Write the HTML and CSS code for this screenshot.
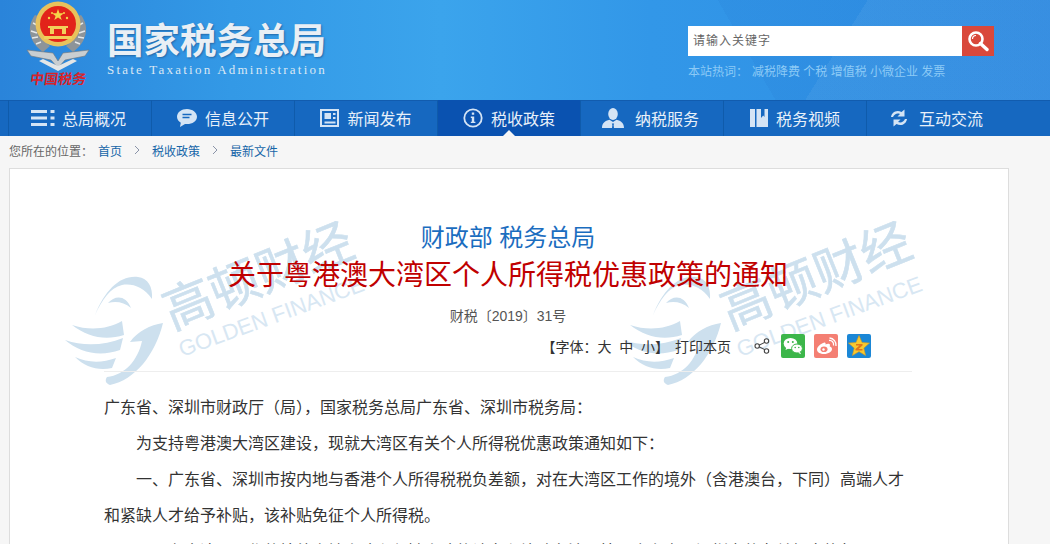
FILE: index.html
```html
<!DOCTYPE html>
<html lang="zh-CN">
<head>
    <meta charset="UTF-8">
    <meta name="viewport" content="width=device-width, initial-scale=1.0">
    <title>关于粤港澳大湾区个人所得税优惠政策的通知</title>
    <link rel="stylesheet" href="styles.css">
</head>
<body>

    <!-- Top banner -->
    <header class="banner">
        <div class="emblem">
            <svg width="70" height="70" viewBox="0 0 70 70">
                <path d="M12 14 C3 26 6 41 20 51 L27 45 C17 38 13 28 17 16Z" fill="#8d9499"/>
                <path d="M58 14 C67 26 64 41 50 51 L43 45 C53 38 57 28 53 16Z" fill="#8d9499"/>
                <path d="M10 22 l6 3 M8 30 l6 2 M9 37 l6 -1 M13 43 l5 -2 M60 22 l-6 3 M62 30 l-6 2 M61 37 l-6 -1 M57 43 l-5 -2" stroke="#e6e9ea" stroke-width="1.500"/>
                <path d="M4 49 L30 52 L35 60 L40 52 L66 49 L62 55 L42 59 L35 67 L28 59 L8 55Z" fill="#c9ced1" stroke="#70777c" stroke-width=".6"/>
                <path d="M16 60 L35 70 L54 60 L50 58 L35 65 L20 58Z" fill="#e3e6e7"/>
                <circle cx="35" cy="23" r="22.500" fill="#e8c25c"/>
                <circle cx="35" cy="23" r="18" fill="#e2231a"/>
                <path d="M35 8 l1.500 4.200 4.400 0 -3.500 2.700 1.300 4.200 -3.700 -2.500 -3.700 2.500 1.300 -4.200 -3.500 -2.700 4.400 0Z" fill="#f6d64a"/>
                <circle cx="26" cy="17" r="1.200" fill="#f6d64a"/>
                <circle cx="44" cy="17" r="1.200" fill="#f6d64a"/>
                <circle cx="29" cy="12" r="1" fill="#f6d64a"/>
                <circle cx="41" cy="12" r="1" fill="#f6d64a"/>
                <path d="M25 25 h20 v2 h-2 v6 h-16 v-6 h-2Z" fill="#f2cf5b"/>
                <path d="M31 28 h8 v5 h-8Z" fill="#e2231a"/>
                <path d="M21 35 h28 v3 h-28Z" fill="#f2cf5b"/>
            </svg>
            <span class="emblem-text">中国税务</span>
        </div>
        <div class="brand">
            <h1>国家税务总局</h1>
            <p>State Taxation Administration</p>
        </div>
        <div class="search-box">
            <div class="search-row">
                <div class="search-input">请输入关键字</div>
                <button class="search-btn" type="button">
                    <svg width="22" height="22" viewBox="0 0 22 22">
                        <circle cx="9" cy="9" r="6.500" fill="none" stroke="#fff" stroke-width="2.600"/>
                        <path d="M5.500 9 a3.500 3.500 0 0 1 3.500 -3.500" fill="none" stroke="#fff" stroke-width="1.200"/>
                        <path d="M13.500 13.500 L20 19.500" stroke="#fff" stroke-width="3.400" stroke-linecap="round"/>
                    </svg>
                </button>
            </div>
            <p class="hot-words">本站热词：<span class="hot-list">减税降费 个税 增值税 小微企业 发票</span></p>
        </div>
    </header>

    <!-- Main navigation -->
    <nav class="main-nav">
        <a class="nav-item">
            <svg class="icon-menu" width="24" height="18" viewBox="0 0 24 18"><path d="M0 1h16v3H0zM0 7.500h16v3H0zM0 14h16v3H0zM19.500 1h4v3h-4zM19.500 7.500h4v3h-4zM19.500 14h4v3h-4z" fill="#d4e4f5"/></svg>
            总局概况
        </a>
        <a class="nav-item">
            <svg width="20" height="18" viewBox="0 0 20 18"><path d="M10 0C4.500 0 0 3.400 0 7.700c0 2.500 1.500 4.600 3.800 6L3 18l5-3.100c.7.100 1.300.2 2 .2 5.500 0 10-3.300 10-7.400S15.500 0 10 0z" fill="#d4e4f5"/><path d="M5.500 5.500h9M5.500 8.500h7" stroke="#1668c0" stroke-width="1.400"/></svg>
            信息公开
        </a>
        <a class="nav-item">
            <svg width="19" height="18" viewBox="0 0 19 18"><path d="M1 1h17v16H1z" fill="none" stroke="#d4e4f5" stroke-width="2"/><path d="M4.500 4h6.500v6H4.500zM13 4h2.500v2H13zM13 8h2.500v2H13zM4.500 12.500h11v2h-11z" fill="#d4e4f5"/></svg>
            新闻发布
        </a>
        <a class="nav-item active">
            <svg width="20" height="20" viewBox="0 0 20 20"><circle cx="10" cy="10" r="8.700" fill="none" stroke="#d4e4f5" stroke-width="1.800"/><path d="M8.800 4.500h2.400v2.300H8.800zM7.800 8.500h3.400v5.200h1.200v1.400H7.800v-1.400h1v-3.800h-1z" fill="#d4e4f5"/></svg>
            税收政策
        </a>
        <a class="nav-item">
            <svg class="icon-wide" width="22" height="20" viewBox="0 0 22 20"><ellipse cx="11" cy="6" rx="4.800" ry="6" fill="#d4e4f5"/><path d="M0 20c0-5 3-7 7.500-8.200L11 14l3.500-2.200C19 13 22 15 22 20H12l-.4-3 .6-1.500h-2.400l.6 1.500-.4 3z" fill="#d4e4f5"/></svg>
            纳税服务
        </a>
        <a class="nav-item">
            <svg width="18" height="18" viewBox="0 0 18 18"><path d="M0 0h5v18H0zM6.500 0h4.500v9l2.200-2.400 1.300 1.500V0H18v18H6.500z" fill="#d4e4f5"/></svg>
            税务视频
        </a>
        <a class="nav-item">
            <svg class="icon-wide" width="18" height="18" viewBox="0 0 18 18"><path d="M1 8C1.500 3.500 6.500 0 11.500 3L14.500 0.500V7.500H7.500L10 5C7 3.800 4.500 5 3 8z M17 10C16.500 14.500 11.500 18 6.500 15L3.500 17.500V10.500H10.500L8 13C11 14.200 13.500 13 15 10z" fill="#d4e4f5"/></svg>
            互动交流
        </a>
    </nav>

    <!-- Breadcrumb -->
    <div class="crumbs">
        <span class="crumbs-label">您所在的位置：</span>
        <a>首页</a>
        <svg class="crumb-arrow" width="6" height="10" viewBox="0 0 6 10"><path d="M1 1l4 4-4 4" fill="none" stroke="#8a93a8"/></svg>
        <a>税收政策</a>
        <svg class="crumb-arrow" width="6" height="10" viewBox="0 0 6 10"><path d="M1 1l4 4-4 4" fill="none" stroke="#8a93a8"/></svg>
        <a>最新文件</a>
    </div>

    <!-- Article -->
    <main class="article">
        <svg class="watermark wm-left" width="340" height="190" viewBox="0 -20 340 190">
            <g fill="#cde0ee">
                <path d="M35 90C45 65 60 50 78 52C88 53 93 62 92 74C84 62 72 58 62 60C50 63 42 75 35 90Z"/>
                <path d="M48 78C55 70 66 70 71 83C64 77 56 76 48 78Z"/>
                <path d="M12 100C30 106 48 104 62 96L64 110C45 116 28 112 12 100Z"/>
                <path d="M5 115C25 122 45 120 63 113L60 125C40 132 20 128 5 115Z"/>
                <path d="M15 132C28 138 42 138 56 133L52 143C38 146 25 142 15 132Z"/>
                <path d="M103 98C90 100 78 106 70 117L82 116C78 135 65 150 47 152C45 155 45 158 50 160C75 155 95 130 103 98Z"/>
            </g>
            <text class="wm-cn" transform="translate(112 105) rotate(-22)">高顿财经</text>
            <text class="wm-en" transform="translate(122 132) rotate(-20)">GOLDEN FINANCE</text>
        </svg>
        <svg class="watermark wm-right" width="340" height="190" viewBox="0 -20 340 190">
            <g fill="#cde0ee">
                <path d="M35 90C45 65 60 50 78 52C88 53 93 62 92 74C84 62 72 58 62 60C50 63 42 75 35 90Z"/>
                <path d="M48 78C55 70 66 70 71 83C64 77 56 76 48 78Z"/>
                <path d="M12 100C30 106 48 104 62 96L64 110C45 116 28 112 12 100Z"/>
                <path d="M5 115C25 122 45 120 63 113L60 125C40 132 20 128 5 115Z"/>
                <path d="M15 132C28 138 42 138 56 133L52 143C38 146 25 142 15 132Z"/>
                <path d="M103 98C90 100 78 106 70 117L82 116C78 135 65 150 47 152C45 155 45 158 50 160C75 155 95 130 103 98Z"/>
            </g>
            <text class="wm-cn" transform="translate(112 105) rotate(-22)">高顿财经</text>
            <text class="wm-en" transform="translate(122 132) rotate(-20)">GOLDEN FINANCE</text>
        </svg>

        <div class="article-head">
            <div class="issuer">财政部 税务总局</div>
            <h2 class="article-title">关于粤港澳大湾区个人所得税优惠政策的通知</h2>
            <div class="doc-no">财税〔2019〕31号</div>
            <div class="tools">
                <span class="font-size">【字体：大&nbsp;&nbsp;中&nbsp;&nbsp;小】</span>
                <span class="print">打印本页</span>
                <svg class="share" width="16" height="16" viewBox="0 0 16 16">
                    <path d="M12.500 3.500L3.500 8l9 4.500" fill="none" stroke="#444" stroke-width="1.100"/>
                    <circle cx="12.500" cy="3" r="2.200" fill="#fff" stroke="#444" stroke-width="1.100"/>
                    <circle cx="3.200" cy="8" r="2.200" fill="#fff" stroke="#444" stroke-width="1.100"/>
                    <circle cx="12.500" cy="13" r="2.200" fill="#fff" stroke="#444" stroke-width="1.100"/>
                </svg>
                <div class="share-icons">
                    <svg width="24" height="24" viewBox="0 0 24 24">
                        <rect width="24" height="24" rx="2" fill="#3cb64a"/>
                        <ellipse cx="9.500" cy="9.500" rx="6.800" ry="5.600" fill="#fff"/>
                        <path d="M5.500 13l-1 3 3.500-1.800z" fill="#fff"/>
                        <ellipse cx="16" cy="14.500" rx="5.400" ry="4.500" fill="#fff" stroke="#3cb64a"/>
                        <path d="M19 18l1.200 2.300-3.200-1.500z" fill="#fff"/>
                        <circle cx="7.200" cy="8" r="1" fill="#3cb64a"/>
                        <circle cx="11.800" cy="8" r="1" fill="#3cb64a"/>
                        <circle cx="14.200" cy="13.500" r=".8" fill="#3cb64a"/>
                        <circle cx="17.800" cy="13.500" r=".8" fill="#3cb64a"/>
                    </svg>
                    <svg width="24" height="24" viewBox="0 0 24 24">
                        <rect width="24" height="24" rx="2" fill="#f47f73"/>
                        <path d="M10.500 8.500C6.500 9.500 3 13 3 15.500 3 18.500 6.500 20 10 20c4.500 0 8-2.400 8-5 0-1.500-1.300-2.200-2.300-2.500.6-1.500.2-2.500-1-2.700-1-.2-2.300.3-3.200.7.400-1.500-.3-2.300-1-2z" fill="#fff"/>
                        <ellipse cx="10" cy="15.300" rx="3.500" ry="2.800" fill="#f47f73"/>
                        <circle cx="9.500" cy="15.500" r="1.200" fill="#fff"/>
                        <path d="M15 6.500a4 4 0 0 1 4.500 5M15.500 4a7 7 0 0 1 6.500 8" fill="none" stroke="#fff" stroke-width="1.300"/>
                    </svg>
                    <svg width="24" height="24" viewBox="0 0 24 24">
                        <rect width="24" height="24" rx="2" fill="#1b87d6"/>
                        <path d="M12 1.500l3 7 7.500.6-5.700 5 1.800 7.400L12 17.600l-6.600 3.900 1.800-7.400-5.700-5L9 8.500z" fill="#f8c92f" stroke="#d99a1c" stroke-width=".6"/>
                        <path d="M9 10h6.500v1.500L11.500 15h4v1.500H8.500V15l4-3.500H9z" fill="#e2731c"/>
                    </svg>
                </div>
            </div>
        </div>

        <div class="article-body">
            <p class="no-indent">广东省、深圳市财政厅（局），国家税务总局广东省、深圳市税务局：</p>
            <p>为支持粤港澳大湾区建设，现就大湾区有关个人所得税优惠政策通知如下：</p>
            <p>一、广东省、深圳市按内地与香港个人所得税税负差额，对在大湾区工作的境外（含港澳台，下同）高端人才和紧缺人才给予补贴，该补贴免征个人所得税。</p>
            <p>二、在大湾区工作的境外高端人才和紧缺人才的认定和补贴办法，按照广东省、深圳市的有关规定执行。</p>
        </div>
    </main>

</body>
</html>
```

FILE: styles.css
```css
/* Page base */
html, body {
    margin: 0;
    height: 544px;
    overflow: hidden;
}

body {
    background-color: #f6f6f6;
    font-family: "Liberation Sans", "Noto Sans CJK SC", sans-serif;
    color: #333;
}

h1, h2, p {
    margin: 0;
    font-weight: normal;
}

/* Banner */
.banner {
    display: flex;
    height: 100px;
    padding-left: 23px;
    padding-right: 56px;
    background-color: #2f8fe3;
    background-image:
        linear-gradient(122deg, rgba(255, 255, 255, 0) 78%, rgba(255, 255, 255, .05) 78%),
        linear-gradient(60deg, rgba(0, 60, 160, 0) 70%, rgba(0, 60, 160, .05) 70%),
        linear-gradient(90deg, #2a84da 0, #3399e6 22%, #3ba4ec 42%, #3297e8 62%, #2f8de3 100%);
}

.emblem {
    display: flex;
    flex-direction: column;
    align-items: center;
    width: 70px;
    padding-top: 1px;
}

.emblem-text {
    font-family: "Liberation Serif", "Noto Sans CJK SC", serif;
    font-size: 14px;
    line-height: 18px;
    font-weight: bold;
    color: #d8232a;
    white-space: nowrap;
    transform: skewX(-8deg);
}

.brand {
    margin-left: 14px;
    padding-top: 21px;
}

.brand h1 {
    font-size: 36.500px;
    line-height: 42px;
    font-weight: bold;
    color: #e9eff5;
    text-shadow: 1px 1px 2px #2368a8;
    white-space: nowrap;
}

.brand p {
    margin-top: -1px;
    font-family: "Liberation Serif", serif;
    font-size: 13px;
    line-height: 16px;
    letter-spacing: 2.220px;
    color: #dbe8f4;
    white-space: nowrap;
}

.search-box {
    margin-left: auto;
    padding-top: 26px;
}

.search-row {
    display: flex;
    height: 30px;
}

.search-input {
    width: 269px;
    padding-left: 5px;
    background-color: #fff;
    font-size: 12px;
    line-height: 30px;
    letter-spacing: 1px;
    color: #666;
}

.search-btn {
    display: flex;
    align-items: center;
    justify-content: center;
    width: 32px;
    padding: 0;
    border: none;
    background-color: #d9483b;
}

.hot-words {
    margin-top: 8px;
    font-size: 12px;
    line-height: 16px;
    color: #8ccaf6;
    white-space: nowrap;
}

.hot-list {
    margin-left: 4px;
}

/* Main navigation */
.main-nav {
    display: flex;
    height: 36px;
    padding-left: 8px;
    background-color: #1668c0;
    box-shadow: inset 0 1px 0 #125cae;
}

.nav-item {
    position: relative;
    display: flex;
    align-items: center;
    justify-content: center;
    gap: 8px;
    width: 143px;
    box-sizing: border-box;
    border-left: 1px solid #0f5bab;
    font-size: 16px;
    color: #e8f0f9;
    white-space: nowrap;
}

.nav-item .icon-menu {
    margin-left: -3px;
    margin-right: -1px;
}

.nav-item .icon-wide {
    margin-left: -3px;
    margin-right: 3px;
}

.nav-item.active {
    background-color: #0a52b0;
}

/* little notch under the active tab */
.nav-item.active::after {
    content: "";
    position: absolute;
    left: 50%;
    bottom: 0;
    margin-left: -6px;
    border-left: 6px solid transparent;
    border-right: 6px solid transparent;
    border-bottom: 6px solid #f6f6f6;
}

/* Breadcrumb */
.crumbs {
    display: flex;
    align-items: center;
    height: 28px;
    padding-bottom: 4px;
    padding-left: 9px;
    font-size: 12px;
}

.crumbs-label {
    width: 89px;
    color: #666;
}

.crumbs a {
    color: #1565a8;
}

.crumb-arrow {
    margin: 0 12px 0 12px;
}

/* Article card */
.article {
    position: relative;
    width: 998px;
    height: 400px;
    margin-left: 9px;
    border: 1px solid #ddd;
    background-color: #fff;
}

.watermark {
    position: absolute;
    top: 36px;
}

.wm-left {
    left: 50px;
}

.wm-right {
    left: 608px;
}

.wm-cn {
    font-size: 50px;
    fill: #cde0ee;
    stroke: #cde0ee;
    stroke-width: .6px;
}

.wm-en {
    font-size: 22px;
    fill: #d8e7f3;
}

.article-head {
    position: relative;
    margin: 0 96px 0 94px;
    padding-top: 50px;
    padding-bottom: 10px;
    border-bottom: 1px solid #eee;
    text-align: center;
}

.issuer {
    font-size: 24px;
    line-height: 38px;
    color: #1b6dbf;
}

.article-title {
    font-size: 28px;
    line-height: 38px;
    color: #c00000;
    white-space: nowrap;
}

.doc-no {
    margin-top: 11px;
    font-size: 14px;
    line-height: 20px;
    color: #555;
}

.tools {
    display: flex;
    align-items: center;
    justify-content: flex-end;
    height: 30px;
    margin-top: 5px;
    padding-right: 41px;
    font-size: 14px;
    color: #333;
}

.print {
    margin-left: 6px;
}

.share {
    margin-left: 23px;
}

.share-icons {
    display: flex;
    gap: 9px;
    margin-left: 11px;
}

.article-body {
    position: relative;
    margin: 18px 96px 0 94px;
    font-size: 16px;
    line-height: 36px;
    color: #333;
}

.article-body p {
    text-indent: 32px;
}

.article-body p.no-indent {
    text-indent: 0;
}
```
